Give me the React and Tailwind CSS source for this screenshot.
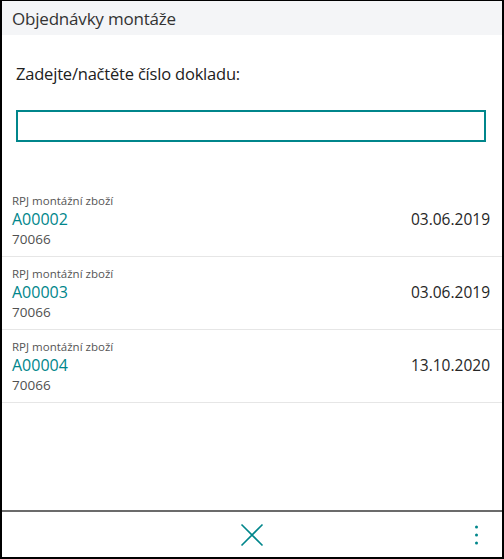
const ORDERS = [
  { no: 'A00002', type: 'RPJ montážní zboží', customer: '70066', date: '03.06.2019' },
  { no: 'A00003', type: 'RPJ montážní zboží', customer: '70066', date: '03.06.2019' },
  { no: 'A00004', type: 'RPJ montážní zboží', customer: '70066', date: '13.10.2020' },
];

export default function App() {
  return (
    <div className="h-[559px] w-[504px] flex flex-col bg-white border-t border-l-2 border-r-2 border-b-2 border-black text-[#262626] font-['Open_Sans',sans-serif]">
      {/* Header */}
      <div className="h-[34px] shrink-0 bg-[#f4f5f7] flex items-center px-[10px]">
        <h1 className="text-[17px] leading-none tracking-[-0.2px] text-[#333]">Objednávky montáže</h1>
      </div>

      {/* Scan field */}
      <div className="px-[14px] pt-[28px]">
        <label className="block text-[16.5px] leading-[22px] tracking-[-0.2px] text-[#212121]">Zadejte/načtěte číslo dokladu:</label>
        <input type="text" className="mt-[25px] block w-[470px] h-[32px] border-2 border-[#00868b] outline-none px-2 text-[15px]" />
      </div>

      {/* List */}
      <div className="mt-[42px] flex-1">
        {ORDERS.map(o => (
          <div key={o.no} className="h-[73px] border-b border-[#e6e6e6] flex items-center justify-between pl-[10px] pr-[12px]">
            <div className="flex flex-col pt-[2px]">
              <span className="text-[11.5px] leading-[15px] text-[#555]">{o.type}</span>
              <span className="text-[16px] leading-[22px] text-[#00868b]">{o.no}</span>
              <span className="text-[13.5px] leading-[19px] text-[#505050]">{o.customer}</span>
            </div>
            <span className="text-[15.5px] text-[#262626]">{o.date}</span>
          </div>
        ))}
      </div>

      {/* Footer */}
      <div className="h-[47px] shrink-0 border-t-2 border-[#6b6b6b] relative flex items-center justify-center">
        <svg width="24" height="24" viewBox="0 0 24 24" className="text-[#00868b]">
          <path d="M1.5 1.5L22.5 22.5M22.5 1.5L1.5 22.5" stroke="currentColor" strokeWidth="1.6" fill="none" />
        </svg>
        <div className="absolute right-[24px] top-1/2 -translate-y-1/2 flex flex-col gap-[5px]">
          <span className="block w-[3px] h-[3px] rounded-full bg-[#00868b]" />
          <span className="block w-[3px] h-[3px] rounded-full bg-[#00868b]" />
          <span className="block w-[3px] h-[3px] rounded-full bg-[#00868b]" />
        </div>
      </div>
    </div>
  );
}
